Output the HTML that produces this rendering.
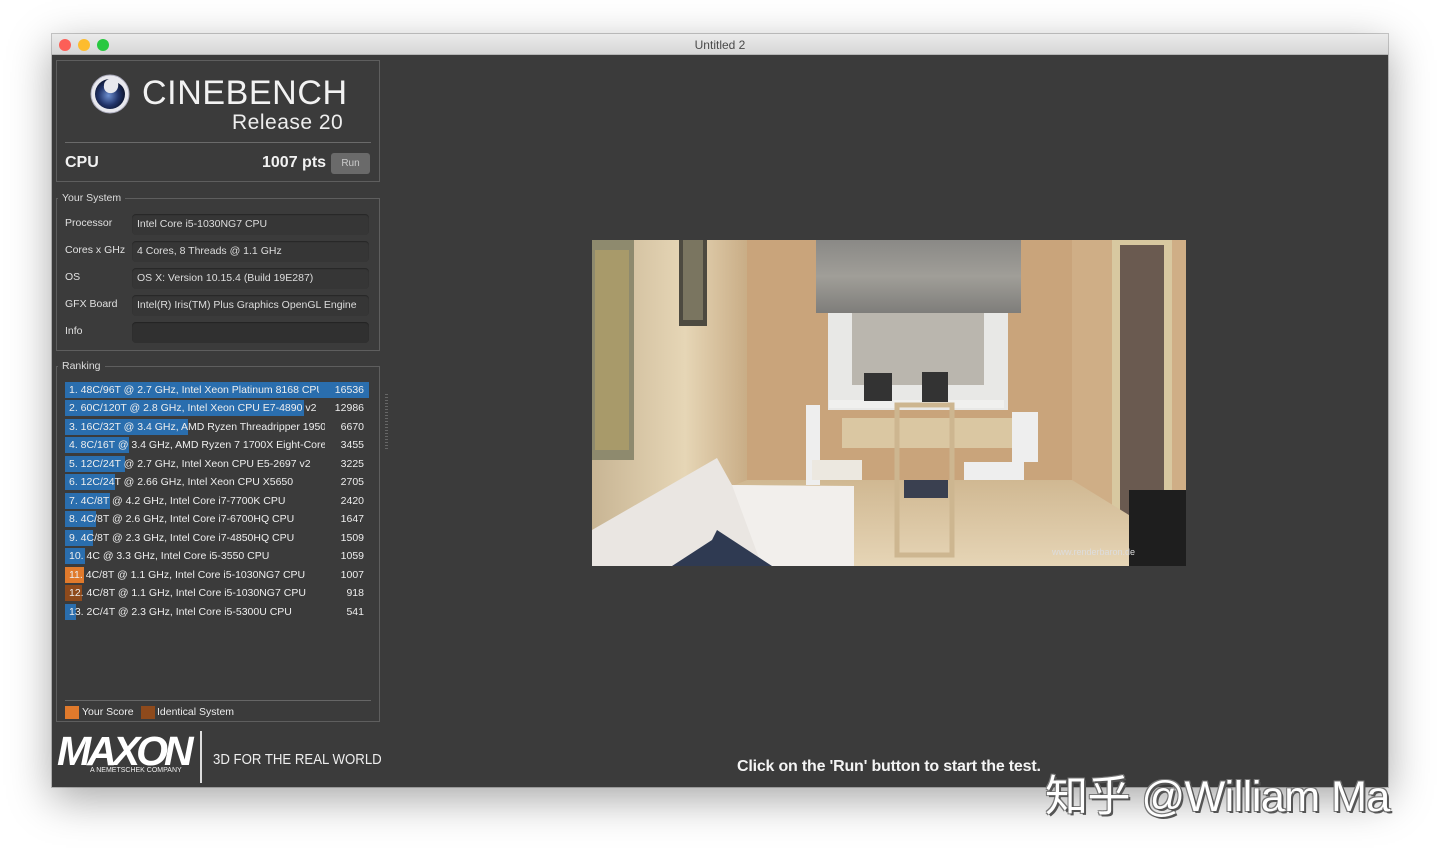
<!DOCTYPE html>
<html><head><meta charset="utf-8"><style>
*{margin:0;padding:0;box-sizing:border-box}
body{width:1440px;height:856px;background:#fff;position:relative;overflow:hidden;font-family:"Liberation Sans",sans-serif;color:#ddd}
.win{position:absolute;left:52px;top:34px;width:1336px;height:753px;background:#3b3b3b;box-shadow:0 12px 40px rgba(0,0,0,.35),0 0 0 1px rgba(0,0,0,.2)}
.tb{position:absolute;left:0;top:0;width:1336px;height:21px;background:linear-gradient(#ebebeb,#d6d6d6);border-bottom:1px solid #b5b5b5;text-align:center;font-size:12px;color:#4a4a4a;line-height:22px}
.dot{position:absolute;top:5px;width:12px;height:12px;border-radius:50%}
.a{position:absolute}
.box{position:absolute;border:1px solid #5e5e5e}
.lg{position:absolute;background:#3b3b3b;font-size:10.5px;color:#ddd;padding:0 4px}
.lab{position:absolute;left:8px;font-size:10.5px;color:#e0e0e0}
.fld{position:absolute;left:75px;width:237px;height:21px;background:#363636;border-radius:4px;font-size:10.5px;color:#ddd;padding-left:5px;line-height:21px;box-shadow:inset 0 1px 1px rgba(0,0,0,.3)}
.row{position:absolute;left:8px;width:304px;height:16px;font-size:10.5px;color:#eee;line-height:16px}
.row .b{position:absolute;left:0;top:0;height:16px;background:#2a6eae}
.row .t{position:absolute;left:4px;top:0;white-space:nowrap;width:250px;overflow:hidden}
.row .s{position:absolute;right:5px;top:0}
</style></head><body>
<div class="win">
<div class="tb">Untitled 2
<div class="dot" style="left:7px;background:#fc5f57"></div>
<div class="dot" style="left:26px;background:#fdbc2e"></div>
<div class="dot" style="left:45px;background:#28c840"></div>
</div>
<div class="box" style="left:4px;top:26px;width:324px;height:122px">
<svg class="a" style="left:32px;top:12px" width="42" height="42" viewBox="0 0 42 42"><defs><radialGradient id="g" cx="45%" cy="55%" r="55%"><stop offset="0" stop-color="#6d8fd0"/><stop offset=".6" stop-color="#22346a"/><stop offset="1" stop-color="#0d1530"/></radialGradient></defs><circle cx="21" cy="21" r="19" fill="#e8e8ee"/><circle cx="21" cy="21" r="19" fill="none" stroke="#aab" stroke-width="1"/><path d="M21 6a15 15 0 1 0 15 15c0-5-3-9-7-11c1 4-1 9-6 10c-5 1-9-3-8-8c0-3 3-6 6-6z" fill="url(#g)"/></svg>
<div class="a" style="left:85px;top:13px;font-size:34px;color:#f2f2f2;letter-spacing:.6px">CINEBENCH</div>
<div class="a" style="left:175px;top:50px;font-size:21px;color:#eee;letter-spacing:.5px">Release 20</div>
<div class="a" style="left:8px;top:81px;width:306px;height:1px;background:#6a6a6a"></div>
<div class="a" style="left:8px;top:93px;font-size:16px;font-weight:bold;color:#f2f2f2">CPU</div>
<div class="a" style="left:205px;top:93px;font-size:16px;font-weight:bold;color:#f2f2f2">1007 pts</div>
<div class="a" style="left:274px;top:92px;width:39px;height:21px;background:#6a6a6a;border-radius:3px;font-size:10px;color:#ccc;text-align:center;line-height:21px">Run</div>
</div>
<div class="box" style="left:4px;top:164px;width:324px;height:153px">
<div class="lg" style="left:1px;top:-7px">Your System</div>
<div class="lab" style="top:18px">Processor</div><div class="fld" style="top:15px">Intel Core i5-1030NG7 CPU</div>
<div class="lab" style="top:45px">Cores x GHz</div><div class="fld" style="top:42px">4 Cores, 8 Threads @ 1.1 GHz</div>
<div class="lab" style="top:72px">OS</div><div class="fld" style="top:69px">OS X: Version 10.15.4 (Build 19E287)</div>
<div class="lab" style="top:99px">GFX Board</div><div class="fld" style="top:96px">Intel(R) Iris(TM) Plus Graphics OpenGL Engine</div>
<div class="lab" style="top:126px">Info</div><div class="fld" style="top:123px;background:#303030"></div>
</div>
<div class="box" style="left:4px;top:332px;width:324px;height:356px">
<div class="lg" style="left:1px;top:-7px">Ranking</div>
<div class="row" style="top:15px"><div class="b" style="width:304px"></div><div class="t" style="width:250px">1. 48C/96T @ 2.7 GHz, Intel Xeon Platinum 8168 CPU</div><div class="s">16536</div></div>
<div class="row" style="top:33px"><div class="b" style="width:239px"></div><div class="t" style="width:252px">2. 60C/120T @ 2.8 GHz, Intel Xeon CPU E7-4890 v2</div><div class="s">12986</div></div>
<div class="row" style="top:52px"><div class="b" style="width:123px"></div><div class="t" style="width:256px">3. 16C/32T @ 3.4 GHz, AMD Ryzen Threadripper 1950X</div><div class="s">6670</div></div>
<div class="row" style="top:70px"><div class="b" style="width:64px"></div><div class="t" style="width:256px">4. 8C/16T @ 3.4 GHz, AMD Ryzen 7 1700X Eight-Core</div><div class="s">3455</div></div>
<div class="row" style="top:89px"><div class="b" style="width:60px"></div><div class="t">5. 12C/24T @ 2.7 GHz, Intel Xeon CPU E5-2697 v2</div><div class="s">3225</div></div>
<div class="row" style="top:107px"><div class="b" style="width:50px"></div><div class="t">6. 12C/24T @ 2.66 GHz, Intel Xeon CPU X5650</div><div class="s">2705</div></div>
<div class="row" style="top:126px"><div class="b" style="width:45px"></div><div class="t">7. 4C/8T @ 4.2 GHz, Intel Core i7-7700K CPU</div><div class="s">2420</div></div>
<div class="row" style="top:144px"><div class="b" style="width:31px"></div><div class="t">8. 4C/8T @ 2.6 GHz, Intel Core i7-6700HQ CPU</div><div class="s">1647</div></div>
<div class="row" style="top:163px"><div class="b" style="width:28px"></div><div class="t">9. 4C/8T @ 2.3 GHz, Intel Core i7-4850HQ CPU</div><div class="s">1509</div></div>
<div class="row" style="top:181px"><div class="b" style="width:20px"></div><div class="t">10. 4C @ 3.3 GHz, Intel Core i5-3550 CPU</div><div class="s">1059</div></div>
<div class="row" style="top:200px"><div class="b" style="width:19px;background:#e07a2c"></div><div class="t">11. 4C/8T @ 1.1 GHz, Intel Core i5-1030NG7 CPU</div><div class="s">1007</div></div>
<div class="row" style="top:218px"><div class="b" style="width:17px;background:#8e4a1c"></div><div class="t">12. 4C/8T @ 1.1 GHz, Intel Core i5-1030NG7 CPU</div><div class="s">918</div></div>
<div class="row" style="top:237px"><div class="b" style="width:11px"></div><div class="t">13. 2C/4T @ 2.3 GHz, Intel Core i5-5300U CPU</div><div class="s">541</div></div>
<div class="a" style="left:8px;top:333px;width:306px;height:1px;background:#666"></div>
<div class="a" style="left:8px;top:339px;width:14px;height:13px;background:#e07a2c"></div>
<div class="a" style="left:25px;top:339px;font-size:10.5px;color:#eee">Your Score</div>
<div class="a" style="left:84px;top:339px;width:14px;height:13px;background:#8e4a1c"></div>
<div class="a" style="left:100px;top:339px;font-size:10.5px;color:#eee">Identical System</div>
</div>
<div class="a" style="left:333px;top:360px;width:3px;height:56px;background:repeating-linear-gradient(#666 0 1px,transparent 1px 3px)"></div>
<div class="a" style="left:5px;top:694px;font-size:41px;font-weight:900;font-style:italic;color:#fff;letter-spacing:-4px">MAXON</div>
<div class="a" style="left:38px;top:733px;font-size:7px;color:#eee">A NEMETSCHEK COMPANY</div>
<div class="a" style="left:148px;top:697px;width:2px;height:52px;background:#ddd"></div>
<div class="a" style="left:161px;top:717px;font-size:15px;color:#eee;transform:scaleX(.88);transform-origin:left;white-space:nowrap">3D FOR THE REAL WORLD</div>
<svg class="a" style="left:540px;top:206px" width="594" height="326" viewBox="0 0 594 326">
<defs><linearGradient id="lw" x1="0" x2="1"><stop offset="0" stop-color="#c8b594"/><stop offset=".6" stop-color="#e6d6b6"/><stop offset="1" stop-color="#c9ad86"/></linearGradient>
<linearGradient id="fl" x1="0" y1="0" x2="0" y2="1"><stop offset="0" stop-color="#d0b892"/><stop offset="1" stop-color="#e6d5b6"/></linearGradient>
<linearGradient id="bl" x1="0" y1="0" x2="0" y2="1"><stop offset="0" stop-color="#8a8986"/><stop offset=".5" stop-color="#a09e98"/><stop offset="1" stop-color="#7e7d7a"/></linearGradient></defs>
<rect width="594" height="326" fill="#c9a47b"/>
<polygon points="0,0 155,0 155,240 0,300" fill="url(#lw)"/>
<rect x="0" y="0" width="42" height="220" fill="#8e8a6e"/><rect x="3" y="10" width="34" height="200" fill="#a89a6a"/>
<rect x="87" y="0" width="28" height="86" fill="#4d4a40"/><rect x="91" y="0" width="20" height="80" fill="#7a7560"/>
<polygon points="480,0 594,0 594,326 480,270" fill="#cfae86"/>
<rect x="520" y="0" width="60" height="320" fill="#d8c8a0"/><rect x="528" y="5" width="44" height="300" fill="#6a5a50"/>
<rect x="236" y="60" width="180" height="110" fill="#e8e8e6"/>
<rect x="260" y="65" width="132" height="80" fill="#bab6ae"/>
<rect x="224" y="0" width="205" height="73" fill="url(#bl)"/>
<rect x="237" y="160" width="175" height="8" fill="#f0f0ee"/>
<rect x="272" y="133" width="28" height="28" fill="#333"/><rect x="330" y="132" width="26" height="30" fill="#333"/>
<polygon points="0,326 0,300 155,240 480,240 594,310 594,326" fill="url(#fl)"/>
<rect x="250" y="178" width="180" height="30" fill="#dac7a2"/>
<rect x="305" y="165" width="55" height="150" fill="none" stroke="#cdb690" stroke-width="5"/>
<rect x="312" y="240" width="44" height="18" fill="#3a4050"/>
<rect x="214" y="165" width="14" height="80" fill="#eee"/><rect x="220" y="220" width="50" height="20" fill="#ece8e0"/>
<rect x="420" y="172" width="26" height="50" fill="#eee"/><rect x="372" y="222" width="60" height="18" fill="#eee"/>
<polygon points="0,326 0,290 125,218 140,245 262,247 262,326" fill="#eae6e2"/>
<polygon points="140,245 262,246 262,326 170,326" fill="#f2efec"/>
<polygon points="80,326 120,300 125,290 180,326" fill="#2f3a52"/>
<rect x="537" y="250" width="57" height="76" fill="#1e1e1e"/>
<text x="460" y="315" font-size="9" fill="#ddd" font-family="Liberation Sans">www.renderbaron.de</text>
</svg>
<div class="a" style="left:685px;top:724px;font-size:16px;font-weight:bold;color:#f4f4f4;letter-spacing:-.2px">Click on the 'Run' button to start the test.</div>
</div>
<div class="a" style="left:1045px;top:762px;font-size:43px;color:#fff;font-family:'Liberation Sans','Noto Sans CJK SC',sans-serif;text-shadow:2px 2px 0 #555,-1px -1px 0 #777,1px -1px 0 #777,-1px 1px 0 #777;white-space:nowrap;letter-spacing:-.5px">知乎 @William Ma</div>
</body></html>
